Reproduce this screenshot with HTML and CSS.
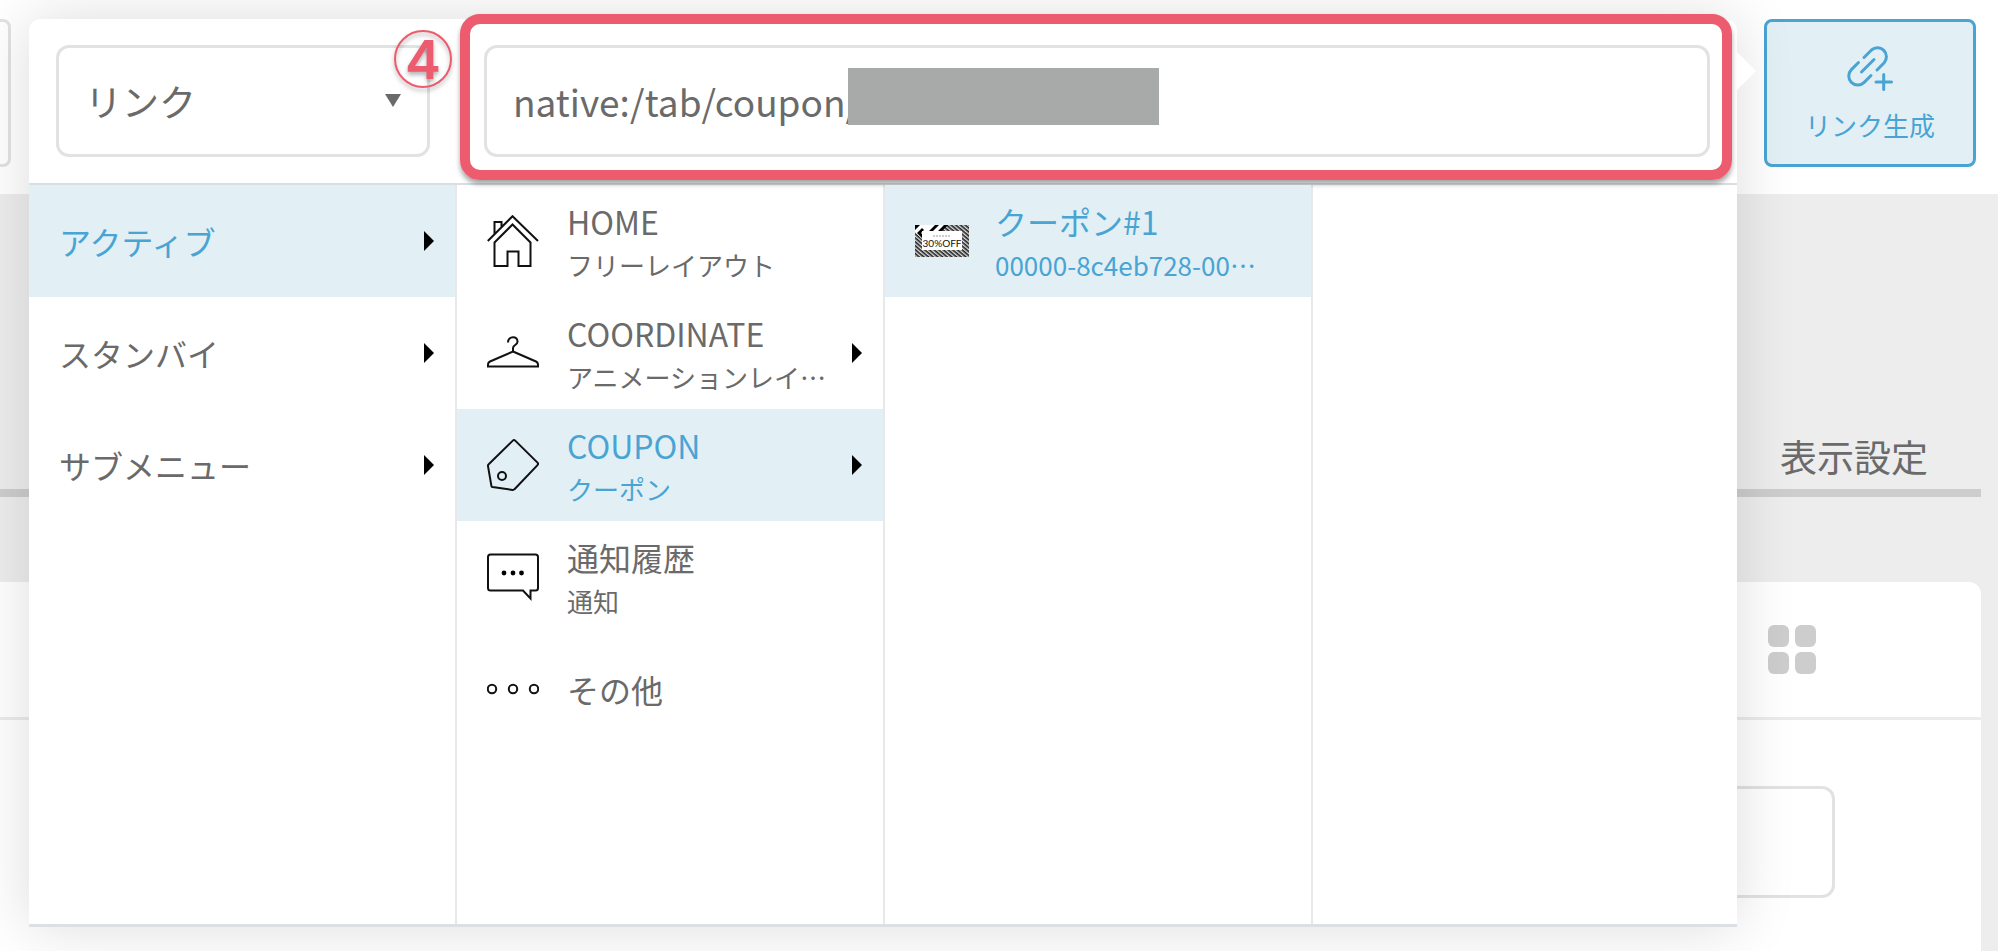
FILE: index.html
```html
<!DOCTYPE html>
<html lang="ja">
  <head>
    <meta charset="utf-8">
    <title>リンク生成</title>
    <link rel="stylesheet" href="styles.css">
  </head>
  <body>
    <header class="toolbar">
      <button type="button" class="tool tool-prev" aria-label="前の項目"></button>
      <div class="link-tool">
        <button type="button" class="tool tool-active">
          <svg width="46" height="46" viewBox="0 0 46 46" fill="none" stroke="currentColor" stroke-width="3" stroke-linecap="round">
            <path d="M17 12.5L24.5 5a9 9 0 0 1 12.7 12.7L30 25"/>
            <path d="M11.5 17.5L4.4 24.6a9 9 0 0 0 12.8 12.8L24 30.5"/>
            <path d="M14.5 27L27 14.5M36.7 29.5v15M29 37h15.5"/>
          </svg>
          リンク生成
        </button>
      </div>
    </header>

    <main class="main">
      <nav class="tabs"><a class="tab" href="#display">表示設定</a></nav>
      <section class="card">
        <div class="card-head">
          <button type="button" class="grid-button" aria-label="グリッド表示">
            <span></span><span></span><span></span><span></span>
          </button>
        </div>
        <div class="card-body">
          <input class="box card-input" type="text" aria-label="表示名">
        </div>
      </section>
    </main>

    <div class="popup">
      <form class="popup-head">
        <div class="type">
          <select class="box type-select" aria-label="種類">
            <option>リンク</option>
          </select>
          <span class="step">4</span>
        </div>
        <div class="url">
          <input class="box url-input" type="text" value="native:/tab/coupon/" aria-label="リンクURL">
          <span class="mask"></span>
          <span class="highlight"></span>
        </div>
      </form>

      <div class="columns">
        <ul class="column">
          <li><button type="button" class="row selected"><span class="label"><span class="title">アクティブ</span></span><i class="arrow"></i></button></li>
          <li><button type="button" class="row"><span class="label"><span class="title">スタンバイ</span></span><i class="arrow"></i></button></li>
          <li><button type="button" class="row"><span class="label"><span class="title">サブメニュー</span></span><i class="arrow"></i></button></li>
        </ul>
        <ul class="column">
          <li>
            <button type="button" class="row">
              <svg class="icon" viewBox="0 0 52 52">
                <path d="M.8 26L25.5 1.2 51 26M7.500 19V7h7v5"/>
                <path d="M7.500 27.500l18-18 18 18V51h-12V36.500h-11V51h-13z"/>
              </svg>
              <span class="label"><span class="title">HOME</span><span class="sub">フリーレイアウト</span></span>
            </button>
          </li>
          <li>
            <button type="button" class="row">
              <svg class="icon" viewBox="0 0 52 52">
                <path d="M21 15.500c0-7 10-7 9.500-.5-.3 3-4.500 3-4.500 6v3.500"/>
                <path d="M26 24.500L49 34.500q2 1 2 3v2H1v-2q0-2 2-3z"/>
              </svg>
              <span class="label"><span class="title">COORDINATE</span><span class="sub">アニメーションレイアウト</span></span>
              <i class="arrow"></i>
            </button>
          </li>
          <li>
            <button type="button" class="row selected">
              <svg class="icon" viewBox="0 0 52 52">
                <path d="M25.800 1.600q1.200-1.200 2.400 0l22.300 22q1.200 1.200 0 2.500L27.500 50.200q-.8.900-2 .7L5.500 48q-1-.2-1.100-1.200L1 27.200q-.2-1.200.7-2z"/>
                <circle cx="15" cy="37" r="4"/>
              </svg>
              <span class="label"><span class="title">COUPON</span><span class="sub">クーポン</span></span>
              <i class="arrow"></i>
            </button>
          </li>
          <li>
            <button type="button" class="row">
              <svg class="icon" viewBox="0 0 52 52">
                <path d="M3.500 3.500h45q2.500 0 2.500 2.500v31q0 2.500-2.500 2.500h-5v8l-7.500-8H3.500Q1 39.500 1 37V6q0-2.500 2.500-2.500z"/>
                <g fill="#000" stroke="none"><circle cx="17" cy="22" r="2.400"/><circle cx="26" cy="22" r="2.400"/><circle cx="34.500" cy="22" r="2.400"/></g>
              </svg>
              <span class="label"><span class="title">通知履歴</span><span class="sub">通知</span></span>
            </button>
          </li>
          <li>
            <button type="button" class="row">
              <svg class="icon" viewBox="0 0 52 52">
                <circle cx="5" cy="26" r="4.200"/><circle cx="26" cy="26" r="4.200"/><circle cx="47" cy="26" r="4.200"/>
              </svg>
              <span class="label"><span class="title">その他</span></span>
            </button>
          </li>
        </ul>
        <ul class="column">
          <li>
            <button type="button" class="row selected">
              <svg class="thumb" viewBox="0 0 54 32">
                <defs>
                  <pattern id="fine" width="3" height="3" patternUnits="userSpaceOnUse" patternTransform="rotate(40)">
                    <rect width="3" height="3" fill="#ddd"/><rect width="3" height="1.600" fill="#222"/>
                  </pattern>
                </defs>
                <rect width="54" height="32" fill="url(#fine)"/>
                <path fill="#fff" d="M0 0h32l-6 7H7v7l-7-7z"/>
                <path d="M0 0h5L0 5zM7 3L2 8l5 5v-4L6 8l3-3zM14 6l6-6h4l-6 6zM23 6l6-6h4l-6 6z"/>
                <rect x="7" y="6" width="40" height="19" fill="#fff"/>
                <path d="M18 11h18" stroke="#999" stroke-dasharray="2 1"/>
                <text class="thumb-text" x="27" y="21.500" text-anchor="middle">30%OFF</text>
              </svg>
              <span class="label"><span class="title">クーポン#1</span><span class="sub">00000-8c4eb728-0000-0000</span></span>
            </button>
          </li>
        </ul>
        <div class="column"></div>
      </div>
    </div>
  </body>
</html>
```
FILE: styles.css
```css
* { box-sizing: border-box; }
body {
  margin: 0;
  min-height: 100vh;
  display: flex;
  flex-direction: column;
  position: relative;
  overflow: hidden;
  background: #fff;
  color: #6a6a6a;
  font-family: "Noto Sans CJK JP", "Noto Sans", sans-serif;
}
button, input, select { font: inherit; color: inherit; }
button { border: 0; padding: 0; background: none; }
ul { list-style: none; margin: 0; padding: 0; }

.box {
  height: 112px;
  border: 3px solid #e0e2e4;
  border-radius: 13px;
  background: #fff;
  font-size: 37px;
  padding: 0 26px;
}

/* page behind the popup */
.toolbar {
  display: flex;
  justify-content: space-between;
  padding: 19px 24px 27px 0;
}
.tool {
  display: flex;
  flex-direction: column;
  align-items: center;
  justify-content: center;
  gap: 14px;
  width: 212px;
  height: 148px;
  padding-top: 4px;
  border: 2px solid #e0e2e4;
  border-radius: 8px;
  font-size: 26px;
  line-height: 40px;
}
.tool-prev { margin-left: -201px; border-width: 3px; }
.tool-active {
  border: 3px solid #49a4d4;
  background: #e2f0f6;
  color: #49a4d4;
}

.main {
  flex: 1;
  display: flex;
  flex-direction: column;
  background: #ededed;
  border-right: 2px solid #fff;
  padding-right: 17px;
}
.tabs {
  display: flex;
  justify-content: flex-end;
  align-items: flex-end;
  height: 303px;
  margin-bottom: 85px;
  padding: 0 53px 5px 0;
  border-bottom: 8px solid #cdcdcd;
}
.tab {
  color: inherit;
  text-decoration: none;
  font-size: 37px;
  line-height: 56px;
}
.card {
  flex: 1;
  background: #fff;
  border-radius: 0 12px 0 0;
}
.card-head {
  display: flex;
  justify-content: flex-end;
  align-items: center;
  height: 138px;
  padding: 0 165px 0 0;
  border-bottom: 3px solid #ebebeb;
}
.grid-button {
  display: grid;
  grid-template-columns: 21px 21px;
  gap: 5px 6px;
}
.grid-button span {
  height: 22px;
  border-radius: 6px;
  background: #cdcdcd;
}
.card-body {
  display: flex;
  padding: 66px 146px 40px 60px;
}
.card-input { flex: 1; }

/* popup */
.popup {
  position: absolute;
  top: 19px;
  left: 29px;
  right: 263px;
  background: #fff;
  border-bottom: 3px solid #dcdfe3;
  border-radius: 12px 12px 0 0;
  box-shadow: 0 0 60px rgba(0, 0, 0, .14);
}
.popup::after {
  content: "";
  position: absolute;
  top: 33px;
  left: 100%;
  border: 19px solid transparent;
  border-left-color: #fff;
  border-right: 0;
}
.popup-head {
  display: flex;
  gap: 54px;
  padding: 26px 27px;
  border-bottom: 2px solid #d8dfe3;
}
.type { position: relative; flex: 0 0 374px; }
.type::before {
  content: "";
  position: absolute;
  right: 29px;
  top: 49px;
  border: 8px solid transparent;
  border-top: 13px solid #6a6a6a;
  border-bottom: 0;
}
.type-select { width: 100%; appearance: none; }
.step {
  position: absolute;
  top: -15px;
  right: -22px;
  width: 58px;
  height: 58px;
  border: 2px solid #ed5b6e;
  border-radius: 50%;
  color: #ed5b6e;
  font: 600 54px/56px Inter, sans-serif;
  text-align: center;
  filter: drop-shadow(0 3px 2px rgba(0, 0, 0, .3));
}
.url { position: relative; flex: 1; }
.url-input { width: 100%; }
.mask {
  position: absolute;
  top: 23px;
  left: 364px;
  width: 311px;
  height: 57px;
  background: #a8aaa9;
}
.highlight {
  position: absolute;
  inset: -31px -22px -23px -24px;
  border: 10px solid #ed5b6e;
  border-radius: 20px;
  box-shadow: 0 4px 5px rgba(0, 0, 0, .35);
  pointer-events: none;
}

.columns {
  display: grid;
  grid-template-columns: repeat(3, 428px) 1fr;
  min-height: 739px;
}
.column { min-width: 0; border-right: 2px solid #e6e8ec; }
.column:last-child { border-right: 0; }
.row {
  display: flex;
  align-items: center;
  gap: 28px;
  position: relative;
  width: 100%;
  height: 112px;
  padding: 0 50px 0 30px;
  text-align: left;
}
.selected { background: #e2f0f6; }
.selected .label { color: #49a4d4; }
.label { flex: 1; min-width: 0; }
.title, .sub {
  display: block;
  overflow: hidden;
  white-space: nowrap;
  text-overflow: ellipsis;
}
.title { font-size: 32px; line-height: 48px; }
.sub { font-size: 26px; line-height: 40px; }
.arrow {
  position: absolute;
  top: 46px;
  right: 21px;
  border: 10px solid transparent;
  border-left: 10px solid #000;
  border-right: 0;
}
.icon {
  flex: none;
  width: 52px;
  height: 52px;
  fill: none;
  stroke: #111;
  stroke-width: 2;
}
.thumb { flex: none; width: 54px; height: 32px; margin-right: -2px; }
.thumb-text { font: 10px Lato, sans-serif; fill: #111; }
```
